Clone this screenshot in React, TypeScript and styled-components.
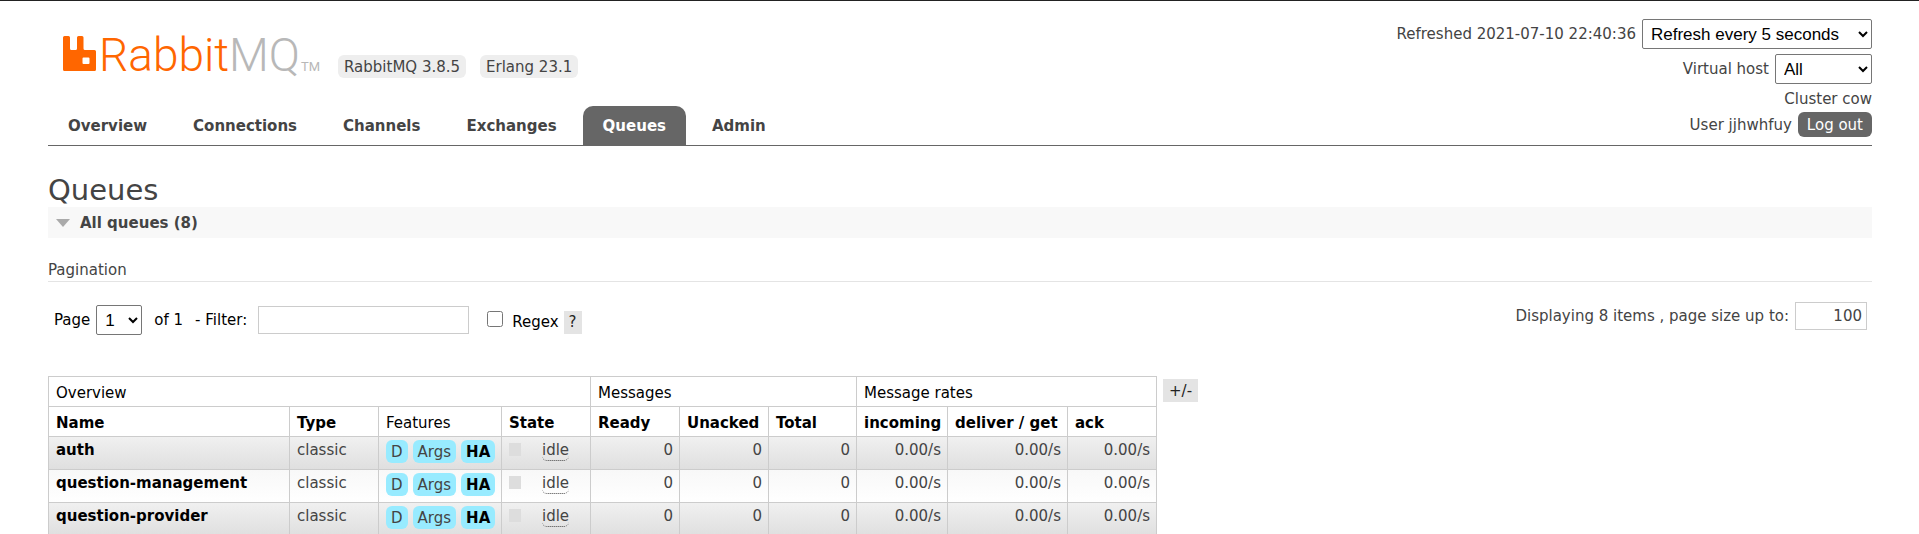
import React from "react";
import styled, { createGlobalStyle } from "styled-components";

const GlobalStyle = createGlobalStyle`
  * { box-sizing: border-box; }
  body {
    margin: 0;
    background: #fff;
    color: #444;
    font-family: Verdana, "DejaVu Sans", sans-serif;
    font-size: 15px;
    line-height: 20px;
  }
`;

const Page = styled.div`
  border-top: 1px solid #222;
  padding: 18px 47px 0 48px;
`;

const Header = styled.header`
  display: flex;
  justify-content: space-between;
  border-bottom: 1px solid #666;
`;

const Brand = styled.div`
  display: flex;
  flex-direction: column;
  justify-content: space-between;
`;

const LogoRow = styled.div`
  display: flex;
  align-items: flex-start;
  padding: 8px 0 0 15px;
`;

const Logo = styled.svg`
  display: block;
  width: 260px;
  height: 60px;
`;

const Versions = styled.div`
  display: flex;
  gap: 14px;
  margin: 28px 0 0 15px;
`;

const Version = styled.span`
  background: #eee;
  border-radius: 6px;
  height: 23px;
  padding: 0 6px;
  line-height: 24px;
  white-space: nowrap;
`;

const Nav = styled.nav`
  display: flex;
  gap: 6px;
`;

const Tab = styled.a<{ $active?: boolean }>`
  height: 39px;
  padding: 0 20px;
  border-radius: 10px 10px 0 0;
  background: ${(p) => (p.$active ? "#666" : "transparent")};
  color: ${(p) => (p.$active ? "#fff" : "#444")};
  font-weight: bold;
  line-height: 41px;
  text-decoration: none;
`;

const Session = styled.div`
  display: flex;
  flex-direction: column;
  align-items: flex-end;
`;

const SessionRow = styled.div<{ $gap: number }>`
  display: flex;
  align-items: center;
  gap: 6px;
  margin-bottom: ${(p) => p.$gap}px;
  white-space: nowrap;
`;

const Label = styled.label<{ $gap?: number }>`
  display: flex;
  align-items: center;
  gap: ${(p) => p.$gap ?? 6}px;
`;

const Select = styled.select<{ $width: number }>`
  width: ${(p) => p.$width}px;
  height: 30px;
  padding: 0 4px;
  border: 1px solid #767676;
  border-radius: 2px;
  background: #fff;
  color: #000;
  font-family: "Liberation Sans", Arial, sans-serif;
  font-size: 17px;
`;

const LogOut = styled.button`
  height: 25px;
  padding: 1px 9px 0;
  border: 0;
  border-radius: 6px;
  background: #666;
  color: #fff;
  font-family: inherit;
  font-size: 15px;
`;

const Title = styled.h1`
  margin: 27px 0 0;
  font-size: 29px;
  font-weight: normal;
  line-height: 34px;
`;

const SectionTitle = styled.h2`
  display: flex;
  align-items: center;
  gap: 10px;
  height: 31px;
  margin: 0 0 20px;
  padding-left: 8px;
  background: #f8f8f8;
  font-size: 15px;
`;

const Arrow = styled.svg`
  width: 14px;
  height: 8px;
`;

const SubTitle = styled.h3`
  height: 24px;
  margin: 0 0 20px;
  padding-top: 2px;
  border-bottom: 1px solid #e4e4e4;
  font-size: 15px;
  font-weight: normal;
`;

const Pagination = styled.div`
  display: flex;
  justify-content: space-between;
  align-items: flex-start;
  margin-bottom: 41px;
  padding: 0 5px 0 6px;
`;

const Filters = styled.form`
  display: flex;
  align-items: center;
  margin-top: 3px;
  color: #000;
`;

const PageCount = styled.span`
  margin: 0 12px;
`;

const TextBox = styled.input<{ $width: number }>`
  width: ${(p) => p.$width}px;
  height: 28px;
  padding: 4px;
  border: 1px solid #ccc;
  font-family: inherit;
  font-size: 15px;
  color: #444;
`;

const NumberBox = styled(TextBox)`
  text-align: right;
`;

const RegexLabel = styled.label`
  display: flex;
  align-items: center;
  gap: 9px;
  margin: 3px 5px 0 18px;
`;

const Check = styled.input`
  width: 16px;
  height: 16px;
  margin: 0 0 6px;
`;

const SmallButton = styled.button`
  height: 23px;
  padding: 0 6px;
  border: 0;
  background: #e4e4e4;
  color: #222;
  font-family: inherit;
  font-size: 15px;
`;

const HelpButton = styled(SmallButton)`
  margin-top: 4px;
  padding: 0 5px;
`;

const PageSize = styled(Label)`
  height: 28px;
`;

const Listing = styled.div`
  display: flex;
  align-items: flex-start;
  gap: 6px;
`;

const ColumnButton = styled(SmallButton)`
  margin-top: 3px;
`;

const Table = styled.table`
  width: 1108px;
  table-layout: fixed;
  border-collapse: collapse;
`;

const Head = styled.th<{ $plain?: boolean }>`
  height: 30px;
  padding: 3px 6px 0 7px;
  border: 1px solid #ccc;
  color: #000;
  font-weight: ${(p) => (p.$plain ? "normal" : "bold")};
  text-align: left;
  white-space: nowrap;
`;

const Row = styled.tr`
  background: linear-gradient(#f8f8f8, #fff);
  &:nth-child(odd) {
    background: linear-gradient(#f0f0f0, #dfdfdf);
  }
`;

const Cell = styled.td<{ $right?: boolean }>`
  height: 33px;
  padding: 3px 6px 0 7px;
  border: 1px solid #ccc;
  text-align: ${(p) => (p.$right ? "right" : "left")};
  vertical-align: top;
  white-space: nowrap;
`;

const QueueLink = styled.a`
  color: #000;
  font-weight: bold;
  text-decoration: none;
`;

const Tags = styled.div`
  display: flex;
  gap: 5px;
`;

const Tag = styled.span<{ $policy?: boolean }>`
  height: 23px;
  padding: 0 5px;
  border-radius: 6px;
  background: #98ebff;
  color: ${(p) => (p.$policy ? "#000" : "#444")};
  font-weight: ${(p) => (p.$policy ? "bold" : "normal")};
  line-height: 24px;
`;

const State = styled.div`
  display: flex;
  align-items: flex-start;
  gap: 21px;
`;

const StateColor = styled.span`
  width: 12px;
  height: 13px;
  margin-top: 3px;
  background: #ddd;
`;

const StateText = styled.abbr`
  border-bottom: 1px dotted #444;
  border-radius: 5px;
  text-decoration: none;
`;

const tabs = ["Overview", "Connections", "Channels", "Exchanges", "Queues", "Admin"];
const queues = ["auth", "question-management", "question-provider"];
const columnWidths = [241, 89, 123, 89, 89, 89, 88, 91, 120, 89];
const columns = ["Name", "Type", "Features", "State", "Ready", "Unacked", "Total", "incoming", "deliver / get", "ack"];
const counts = ["0", "0", "0", "0.00/s", "0.00/s", "0.00/s"];

function BrandLogo() {
  return (
    <Logo viewBox="0 0 260 60" role="img" aria-label="RabbitMQ">
      <path
        fill="#f60"
        fillRule="evenodd"
        d="M1.500 9H5.500Q7 9 7 10.500V21.500Q7 23 8.500 23H12.500Q14 23 14 21.500V10.500Q14 9 15.500 9H19Q20.500 9 20.500 10.500V21.500Q20.500 23 22 23H31.500Q33 23 33 24.500V42.500Q33 44 31.500 44H1.500Q0 44 0 42.500V10.500Q0 9 1.500 9ZM20.500 30.500Q19.500 30.500 19.500 31.500V36Q19.500 37 20.500 37H25.500Q26.500 37 26.500 36V31.500Q26.500 30.500 25.500 30.500Z"
      />
      <g fontFamily="Roboto, 'Liberation Sans', sans-serif">
        <text x="36" y="44" fontSize="46" fontWeight="300" fill="#f60">
          Rabbit<tspan fill="#b8b8b8">MQ</tspan>
        </text>
        <text x="238" y="44" fontSize="13" fill="#b8b8b8">TM</text>
      </g>
    </Logo>
  );
}

export default function App() {
  return (
    <>
      <GlobalStyle />
      <Page>
        <Header>
          <Brand>
            <LogoRow>
              <BrandLogo />
              <Versions>
                <Version>RabbitMQ 3.8.5</Version>
                <Version>Erlang 23.1</Version>
              </Versions>
            </LogoRow>
            <Nav>
              {tabs.map((t) => (
                <Tab key={t} href="#" $active={t === "Queues"}>{t}</Tab>
              ))}
            </Nav>
          </Brand>
          <Session>
            <SessionRow $gap={5}>
              <Label>
                Refreshed 2021-07-10 22:40:36
                <Select $width={230}><option>Refresh every 5 seconds</option></Select>
              </Label>
            </SessionRow>
            <SessionRow $gap={5}>
              <Label>
                Virtual host
                <Select $width={97}><option>All</option></Select>
              </Label>
            </SessionRow>
            <SessionRow $gap={3}>Cluster cow</SessionRow>
            <SessionRow $gap={8}>
              User jjhwhfuy
              <LogOut type="button">Log out</LogOut>
            </SessionRow>
          </Session>
        </Header>

        <main>
          <Title>Queues</Title>
          <SectionTitle>
            <Arrow viewBox="0 0 14 8"><path d="M0 0H14L7 8Z" fill="#aaa" /></Arrow>
            All queues (8)
          </SectionTitle>
          <SubTitle>Pagination</SubTitle>

          <Pagination>
            <Filters>
              <Label>
                Page
                <Select $width={46}><option>1</option></Select>
              </Label>
              <PageCount>of 1</PageCount>
              <Label $gap={11}>
                - Filter:
                <TextBox $width={211} type="text" />
              </Label>
              <RegexLabel>
                <Check type="checkbox" />
                Regex
              </RegexLabel>
              <HelpButton type="button">?</HelpButton>
            </Filters>
            <PageSize>
              Displaying 8 items , page size up to:
              <NumberBox $width={72} type="text" defaultValue="100" />
            </PageSize>
          </Pagination>

          <Listing>
            <Table>
              <colgroup>
                {columnWidths.map((w, i) => <col key={i} width={w} />)}
              </colgroup>
              <thead>
                <tr>
                  <Head $plain colSpan={4}>Overview</Head>
                  <Head $plain colSpan={3}>Messages</Head>
                  <Head $plain colSpan={3}>Message rates</Head>
                </tr>
                <tr>
                  {columns.map((c) => <Head key={c} $plain={c === "Features"}>{c}</Head>)}
                </tr>
              </thead>
              <tbody>
                {queues.map((q) => (
                  <Row key={q}>
                    <Cell><QueueLink href="#">{q}</QueueLink></Cell>
                    <Cell>classic</Cell>
                    <Cell>
                      <Tags>
                        <Tag>D</Tag>
                        <Tag>Args</Tag>
                        <Tag $policy>HA</Tag>
                      </Tags>
                    </Cell>
                    <Cell>
                      <State>
                        <StateColor />
                        <StateText>idle</StateText>
                      </State>
                    </Cell>
                    {counts.map((n, i) => <Cell key={i} $right>{n}</Cell>)}
                  </Row>
                ))}
              </tbody>
            </Table>
            <ColumnButton type="button">+/-</ColumnButton>
          </Listing>
        </main>
      </Page>
    </>
  );
}
